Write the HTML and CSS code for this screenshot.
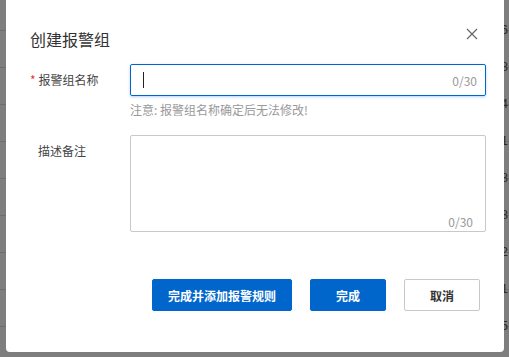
FILE: index.html
```html
<!DOCTYPE html>
<html>
<head>
    <meta charset="utf-8">
    <link rel="stylesheet" href="styles.css">
</head>
<body>
    <div class="backdrop">
        <div class="row"><span>6</span></div>
        <div class="row"><span>8</span></div>
        <div class="row"><span>4</span></div>
        <div class="row"><span>1</span></div>
        <div class="row"><span>8</span></div>
        <div class="row"><span>8</span></div>
        <div class="row"><span>2</span></div>
        <div class="row"><span>1</span></div>
        <div class="row"><span>5</span></div>
    </div>

    <div class="dialog">
        <div class="dialog-header">
            <h2>创建报警组</h2>
            <span class="close">
                <svg width="12" height="12" viewBox="0 0 12 12">
                    <path d="M1 1L11 11M11 1L1 11" stroke="#666" stroke-width="1.2" fill="none"/>
                </svg>
            </span>
        </div>

        <div class="form-row">
            <label class="form-label"><i>*</i>报警组名称</label>
            <div class="form-field">
                <div class="input focused">
                    <span class="caret"></span>
                    <span class="count">0/30</span>
                </div>
                <div class="hint">注意: 报警组名称确定后无法修改!</div>
            </div>
        </div>

        <div class="form-row">
            <label class="form-label">描述备注</label>
            <div class="form-field">
                <div class="textarea">
                    <span class="count">0/30</span>
                </div>
            </div>
        </div>

        <div class="dialog-footer">
            <button class="btn primary wide">完成并添加报警规则</button>
            <button class="btn primary">完成</button>
            <button class="btn">取消</button>
        </div>
    </div>
</body>
</html>
```

FILE: styles.css
```css
body {
    margin: 0;
    width: 509px;
    height: 357px;
    overflow: hidden;
    background: #7e7e7e;
    font-family: "Noto Sans CJK SC", "Noto Sans", sans-serif;
    position: relative;
}
.backdrop {
    padding-top: 30px;
}
.row {
    height: 36px;
    border-top: 1px solid #6e6e6e;
    display: flex;
    justify-content: flex-end;
    align-items: center;
    padding-right: 1px;
    font-family: "Liberation Sans", sans-serif;
    font-size: 13px;
    color: #2a2a2a;
}
.row span {
    margin-top: -40px;
}
.dialog {
    position: absolute;
    left: 6px;
    top: -4px;
    width: 498px;
    height: 356px;
    background: white;
    border-radius: 4px;
    box-sizing: border-box;
    padding: 0 18px 0 24px;
}
.dialog-header {
    display: flex;
    justify-content: space-between;
    align-items: center;
    height: 46px;
    margin-top: 22px;
}
.dialog-header h2 {
    margin: -4px 0 0;
    font-size: 16px;
    font-weight: normal;
    color: #333;
}
.close {
    display: flex;
    margin-right: 8px;
    margin-top: -14px;
}
.form-row {
    display: flex;
    margin-bottom: 17px;
}
.form-label {
    width: 100px;
    font-size: 12px;
    color: #444;
    padding-top: 7px;
    padding-left: 8px;
    box-sizing: border-box;
}
.form-label i {
    font-style: normal;
    color: #e33;
    margin-left: -8px;
    margin-right: 3px;
}
.form-field {
    flex: 1;
}
.input {
    height: 32px;
    border: 1px solid #0066cc;
    border-radius: 2px;
    box-sizing: border-box;
    box-shadow: 0 1px 3px rgba(0,102,204,0.3);
    display: flex;
    align-items: center;
    justify-content: space-between;
    padding: 0 8px 0 12px;
}
.caret {
    width: 1px;
    height: 16px;
    background: #222;
}
.count {
    font-size: 12px;
    color: #999;
}
.hint {
    font-size: 12px;
    color: #999;
    margin-top: 5px;
}
.textarea {
    height: 97px;
    border: 1px solid #c8c8c8;
    border-radius: 2px;
    box-sizing: border-box;
    display: flex;
    align-items: flex-end;
    justify-content: flex-end;
    padding: 0 12px 1px 0;
}
.dialog-footer {
    display: flex;
    justify-content: flex-end;
    gap: 18px;
    margin-top: 47px;
    padding-right: 6px;
}
.btn {
    height: 32px;
    width: 76px;
    border: 1px solid #c8c8c8;
    border-radius: 2px;
    background: white;
    font-family: inherit;
    font-size: 12px;
    font-weight: bold;
    color: #333;
    padding: 0;
}
.btn.primary {
    background: #0066cc;
    border-color: #0066cc;
    color: white;
}
.btn.wide {
    width: 140px;
}
```
